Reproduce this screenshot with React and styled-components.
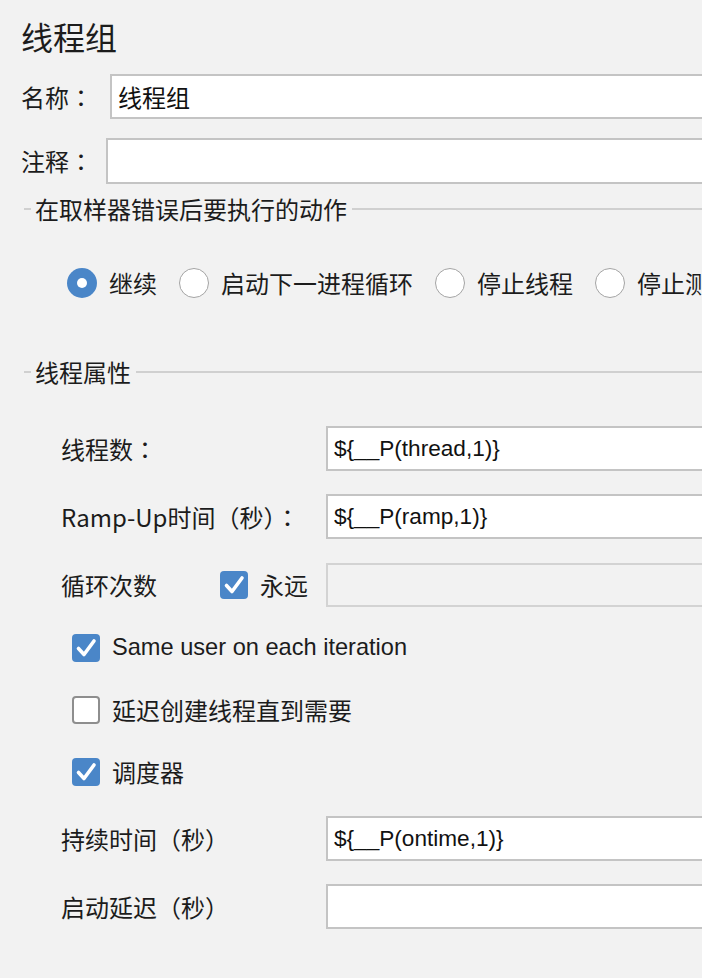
import React from 'react';
import styled, { createGlobalStyle } from 'styled-components';

const CJK = `"Noto Sans CJK SC", "Noto Sans", sans-serif`;
const LATIN = `"Liberation Sans", "Noto Sans CJK SC", sans-serif`;

const GlobalStyle = createGlobalStyle`
  html, body { margin: 0; padding: 0; background: #f2f2f2; }
  body { overflow: hidden; }
`;

const Page = styled.div`
  width: 702px;
  height: 978px;
  overflow: hidden;
  background: #f2f2f2;
  color: #1c1c1c;
  font-family: ${CJK};
  font-size: 24px;
  display: flex;
  flex-direction: column;
`;

const Row = styled.div`
  display: flex;
  align-items: center;
  flex: none;
  height: ${(p) => p.$h}px;
  margin-top: ${(p) => p.$top || 0}px;
  padding-left: ${(p) => p.$indent || 0}px;
  white-space: nowrap;
`;

const Title = styled.h1`
  margin: 0;
  font-size: 32px;
  font-weight: 400;
  line-height: 1;
`;

const Label = styled.span`
  flex: none;
  width: ${(p) => p.$w}px;
  line-height: 1;
`;

/* full-width punctuation centred in its cell, as in the reference */
const Punct = styled.span`
  font-family: "Noto Sans CJK TC", "Noto Sans CJK SC", sans-serif;
`;

const Input = styled.input`
  flex: none;
  width: 800px;
  height: 100%;
  box-sizing: border-box;
  margin: 0;
  padding: 0 0 0 6px;
  outline: none;
  color: #111;
  background: ${(p) => (p.disabled ? '#f2f2f2' : '#ffffff')};
  border: 2px solid ${(p) => (p.disabled ? '#d3d3d3' : '#c4c4c4')};
  font-family: ${(p) => (p.$latin ? LATIN : CJK)};
  font-size: ${(p) => (p.$latin ? 22.6 : 24)}px;
`;

const GroupHead = styled.div`
  display: flex;
  align-items: center;
  flex: none;
  height: 26px;
  margin-top: ${(p) => p.$top}px;
  padding-left: 24px;
  white-space: nowrap;
`;

const Dash = styled.span`
  flex: none;
  width: 7px;
  height: 2px;
  background: #d0d0d0;
`;

const GroupText = styled.span`
  margin: 0 5px 0 4px;
  line-height: 1;
`;

const Rule = styled.span`
  flex: 1;
  height: 2px;
  background: #d0d0d0;
`;

const RadioGroup = styled.div`
  display: flex;
  align-items: center;
  gap: 22px;
`;

const Option = styled.label`
  display: flex;
  align-items: center;
  gap: 12px;
  line-height: 1;
`;

const Radio = styled.span`
  flex: none;
  width: 30px;
  height: 30px;
  box-sizing: border-box;
  border-radius: 50%;
  display: flex;
  align-items: center;
  justify-content: center;
  background: ${(p) => (p.$on ? '#4a86c8' : '#ffffff')};
  border: ${(p) => (p.$on ? 'none' : '1.5px solid #a4a4a4')};
  &::after {
    content: '';
    display: ${(p) => (p.$on ? 'block' : 'none')};
    width: 10px;
    height: 10px;
    border-radius: 50%;
    background: #ffffff;
  }
`;

const Box = styled.span`
  flex: none;
  width: 28px;
  height: 28px;
  box-sizing: border-box;
  border-radius: 4px;
  display: flex;
  align-items: center;
  justify-content: center;
  background: ${(p) => (p.$on ? '#4a86c8' : '#ffffff')};
  border: ${(p) => (p.$on ? 'none' : '2px solid #8e8e8e')};
`;

const CheckText = styled.span`
  flex: none;
  line-height: 1;
  margin-left: 12px;
  width: ${(p) => (p.$w ? `${p.$w}px` : 'auto')};
  font-family: ${(p) => (p.$latin ? LATIN : CJK)};
  font-size: ${(p) => (p.$latin ? 23.6 : 24)}px;
`;

const Check = ({ on }) => (
  <Box $on={on}>
    {on && (
      <svg width="28" height="28" viewBox="0 0 28 28">
        <path d="M6.5 14.5 L12 20.5 L22 7" fill="none" stroke="#fff" strokeWidth="3.6" strokeLinecap="round" strokeLinejoin="round" />
      </svg>
    )}
  </Box>
);

export default function App() {
  return (
    <Page>
      <GlobalStyle />
      <Row $h={72} $indent={21}>
        <Title>线程组</Title>
      </Row>
      <Row $h={45} $top={2} $indent={21}>
        <Label $w={89}>名称<Punct>：</Punct></Label>
        <Input readOnly value="线程组" />
      </Row>
      <Row $h={46} $top={19} $indent={21}>
        <Label $w={85}>注释<Punct>：</Punct></Label>
        <Input readOnly value="" />
      </Row>

      <GroupHead $top={12}>
        <Dash />
        <GroupText>在取样器错误后要执行的动作</GroupText>
        <Rule />
      </GroupHead>
      <Row $h={30} $top={46} $indent={67}>
        <RadioGroup>
          <Option><Radio $on />继续</Option>
          <Option><Radio />启动下一进程循环</Option>
          <Option><Radio />停止线程</Option>
          <Option><Radio />停止测试</Option>
        </RadioGroup>
      </Row>

      <GroupHead $top={61}>
        <Dash />
        <GroupText>线程属性</GroupText>
        <Rule />
      </GroupHead>
      <Row $h={45} $top={41} $indent={61}>
        <Label $w={265}>线程数<Punct>：</Punct></Label>
        <Input $latin readOnly value="${__P(thread,1)}" />
      </Row>
      <Row $h={45} $top={23} $indent={61}>
        <Label $w={265}>Ramp-Up时间<Punct>（</Punct>秒<Punct>）：</Punct></Label>
        <Input $latin readOnly value="${__P(ramp,1)}" />
      </Row>
      <Row $h={44} $top={24} $indent={61}>
        <Label $w={159}>循环次数</Label>
        <Check on />
        <CheckText $w={66}>永远</CheckText>
        <Input disabled value="" />
      </Row>
      <Row $h={28} $top={27} $indent={72}>
        <Check on />
        <CheckText $latin>Same user on each iteration</CheckText>
      </Row>
      <Row $h={28} $top={34} $indent={72}>
        <Check />
        <CheckText>延迟创建线程直到需要</CheckText>
      </Row>
      <Row $h={28} $top={34} $indent={72}>
        <Check on />
        <CheckText>调度器</CheckText>
      </Row>
      <Row $h={45} $top={30} $indent={61}>
        <Label $w={265}>持续时间<Punct>（</Punct>秒<Punct>）</Punct></Label>
        <Input $latin readOnly value="${__P(ontime,1)}" />
      </Row>
      <Row $h={45} $top={23} $indent={61}>
        <Label $w={265}>启动延迟<Punct>（</Punct>秒<Punct>）</Punct></Label>
        <Input readOnly value="" />
      </Row>
    </Page>
  );
}
